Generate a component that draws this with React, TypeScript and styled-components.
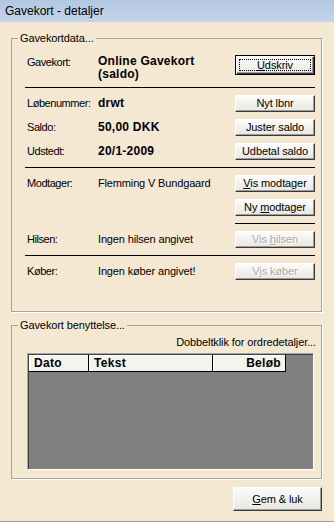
import styled, { createGlobalStyle } from 'styled-components';

const GlobalStyle = createGlobalStyle`
  html, body {
    margin: 0;
    padding: 0;
    background: #f4e8d3;
  }
  body {
    font-family: "Liberation Sans", Arial, sans-serif;
    font-size: 11px;
    color: #000;
  }
`;

/* Vindue med titellinje */
const Window = styled.div`
  width: 334px;
  height: 522px;
  box-sizing: border-box;
  display: flex;
  flex-direction: column;
  background: #f4e8d3;
  border-bottom: 1px solid #a39d93;
`;

const TitleBar = styled.div`
  flex: none;
  height: 22px;
  display: flex;
  align-items: center;
  padding-left: 5px;
  font-size: 12px;
  background: linear-gradient(#b3c7e2, #c4d4ea);
`;

const Body = styled.div`
  flex: 1;
  display: flex;
  flex-direction: column;
  padding: 10px 12px 0 11px;
`;

const GroupBox = styled.fieldset<{ $gap?: number }>`
  margin: ${p => p.$gap ?? 0}px 0 0 0;
  padding: 0;
  min-width: 0;
  border: 1px solid #a9a297;
  box-shadow: 1px 1px 0 #fff;
`;

const Legend = styled.legend`
  margin-left: 6px;
  padding: 0 2px;
  font-size: 11px;
  line-height: 13px;
  letter-spacing: -0.1px;
`;

const DataContent = styled.div`
  display: flex;
  flex-direction: column;
  padding: 10px 6px 31px 15px;
`;

const Row = styled.div<{ $tall?: boolean }>`
  display: grid;
  grid-template-columns: 71px 1fr 80px;
  align-items: ${p => (p.$tall ? 'start' : 'center')};
  min-height: 17px;

  & + & {
    margin-top: 7px;
  }
`;

const Label = styled.span<{ $top?: boolean }>`
  line-height: 13px;
  letter-spacing: -0.45px;
  padding-top: ${p => (p.$top ? 1 : 0)}px;
  white-space: nowrap;
`;

const Value = styled.span<{ $bold?: boolean }>`
  font-size: ${p => (p.$bold ? 12 : 11)}px;
  font-weight: ${p => (p.$bold ? 700 : 400)};
  line-height: 13px;
  letter-spacing: ${p => (p.$bold ? '0.25px' : '-0.15px')};
  white-space: nowrap;
`;

const Lines = styled.div`
  display: flex;
  flex-direction: column;
`;

const Rule = styled.div<{ $short?: boolean; $tight?: boolean }>`
  height: 1px;
  background: #000;
  margin-top: ${p => (p.$tight ? 6 : 7)}px;
  margin-bottom: 7px;
  width: ${p => (p.$short ? '80px' : 'auto')};
  margin-left: ${p => (p.$short ? 'auto' : '-2px')};
`;

const Button = styled.button<{ $default?: boolean; $wide?: boolean }>`
  box-sizing: border-box;
  width: ${p => (p.$wide ? 89 : 80)}px;
  height: ${p => (p.$wide ? 24 : p.$default ? 20 : 17)}px;
  padding: 0;
  font-family: "Liberation Sans", Arial, sans-serif;
  font-size: 11px;
  line-height: 1;
  letter-spacing: -0.1px;
  color: #000;
  background: linear-gradient(#fbfbf9, #e8e7e2);
  border: 1px solid;
  border-color: ${p => (p.$default ? '#000' : '#fff #3a3a3a #3a3a3a #fff')};
  box-shadow: ${p =>
    p.$default
      ? 'inset 1px 1px 0 #fff, inset -1px -1px 0 #3a3a3a, inset -2px -2px 0 #9c9c9c'
      : 'inset -1px -1px 0 #9c9c9c'};
  outline: ${p => (p.$default ? '1px dotted #000' : 'none')};
  outline-offset: -5px;
  cursor: pointer;

  &:disabled {
    color: #aaa;
    text-shadow: 1px 1px 0 #fff;
    cursor: default;
  }
`;

const UsageContent = styled.div`
  display: flex;
  flex-direction: column;
  padding: 4px 5px 8px 15px;
`;

const Hint = styled.div`
  text-align: right;
  line-height: 13px;
  letter-spacing: -0.1px;
`;

const ListView = styled.div`
  margin: 4px 2px 0 0;
  height: 117px;
  box-sizing: border-box;
  background: #808080;
  border: 1px solid;
  border-color: #a7a7a7 #fff #fff #a7a7a7;
  box-shadow: inset 1px 1px 0 #404040;
  padding: 1px 0 0 1px;
`;

const HeaderRow = styled.div`
  display: grid;
  grid-template-columns: 60px 124px 73px;
  width: 257px;
  height: 17px;
  box-sizing: border-box;
  background: #f3f3f0;
  border-bottom: 1px solid #000;
`;

const HeaderCell = styled.div<{ $right?: boolean }>`
  box-sizing: border-box;
  display: flex;
  align-items: center;
  justify-content: ${p => (p.$right ? 'flex-end' : 'flex-start')};
  padding: 0 4px 0 5px;
  font-size: 12px;
  font-weight: 700;
  letter-spacing: 0.3px;
  border-right: 1px solid #000;
  box-shadow: inset 1px 1px 0 #fff;
`;

const Footer = styled.div`
  display: flex;
  justify-content: flex-end;
  margin-top: 8px;
`;

const data = {
  type: 'Online Gavekort',
  typeSub: '(saldo)',
  number: 'drwt',
  saldo: '50,00 DKK',
  issued: '20/1-2009',
  receiver: 'Flemming V Bundgaard',
  greeting: 'Ingen hilsen angivet',
  buyer: 'Ingen køber angivet!',
};

export default function App() {
  return (
    <>
      <GlobalStyle />
      <Window>
        <TitleBar>Gavekort - detaljer</TitleBar>
        <Body>
          <GroupBox>
            <Legend>Gavekortdata...</Legend>
            <DataContent>
              <Row $tall>
                <Label $top>Gavekort:</Label>
                <Lines>
                  <Value $bold>{data.type}</Value>
                  <Value $bold>{data.typeSub}</Value>
                </Lines>
                <Button $default>
                  <u>U</u>dskriv
                </Button>
              </Row>
              <Rule $tight />
              <Row>
                <Label>Løbenummer:</Label>
                <Value $bold>{data.number}</Value>
                <Button>Nyt lbnr</Button>
              </Row>
              <Row>
                <Label>Saldo:</Label>
                <Value $bold>{data.saldo}</Value>
                <Button>Juster saldo</Button>
              </Row>
              <Row>
                <Label>Udstedt:</Label>
                <Value $bold>{data.issued}</Value>
                <Button>Udbetal saldo</Button>
              </Row>
              <Rule />
              <Row>
                <Label>Modtager:</Label>
                <Value>{data.receiver}</Value>
                <Button>
                  <u>V</u>is modtager
                </Button>
              </Row>
              <Row>
                <span />
                <span />
                <Button>
                  Ny <u>m</u>odtager
                </Button>
              </Row>
              <Rule $short />
              <Row>
                <Label>Hilsen:</Label>
                <Value>{data.greeting}</Value>
                <Button disabled>
                  Vis <u>h</u>ilsen
                </Button>
              </Row>
              <Rule />
              <Row>
                <Label>Køber:</Label>
                <Value>{data.buyer}</Value>
                <Button disabled>
                  V<u>i</u>s køber
                </Button>
              </Row>
            </DataContent>
          </GroupBox>

          <GroupBox $gap={7}>
            <Legend>Gavekort benyttelse...</Legend>
            <UsageContent>
              <Hint>Dobbeltklik for ordredetaljer...</Hint>
              <ListView>
                <HeaderRow>
                  <HeaderCell>Dato</HeaderCell>
                  <HeaderCell>Tekst</HeaderCell>
                  <HeaderCell $right>Beløb</HeaderCell>
                </HeaderRow>
              </ListView>
            </UsageContent>
          </GroupBox>

          <Footer>
            <Button $wide>
              <u>G</u>em &amp; luk
            </Button>
          </Footer>
        </Body>
      </Window>
    </>
  );
}
